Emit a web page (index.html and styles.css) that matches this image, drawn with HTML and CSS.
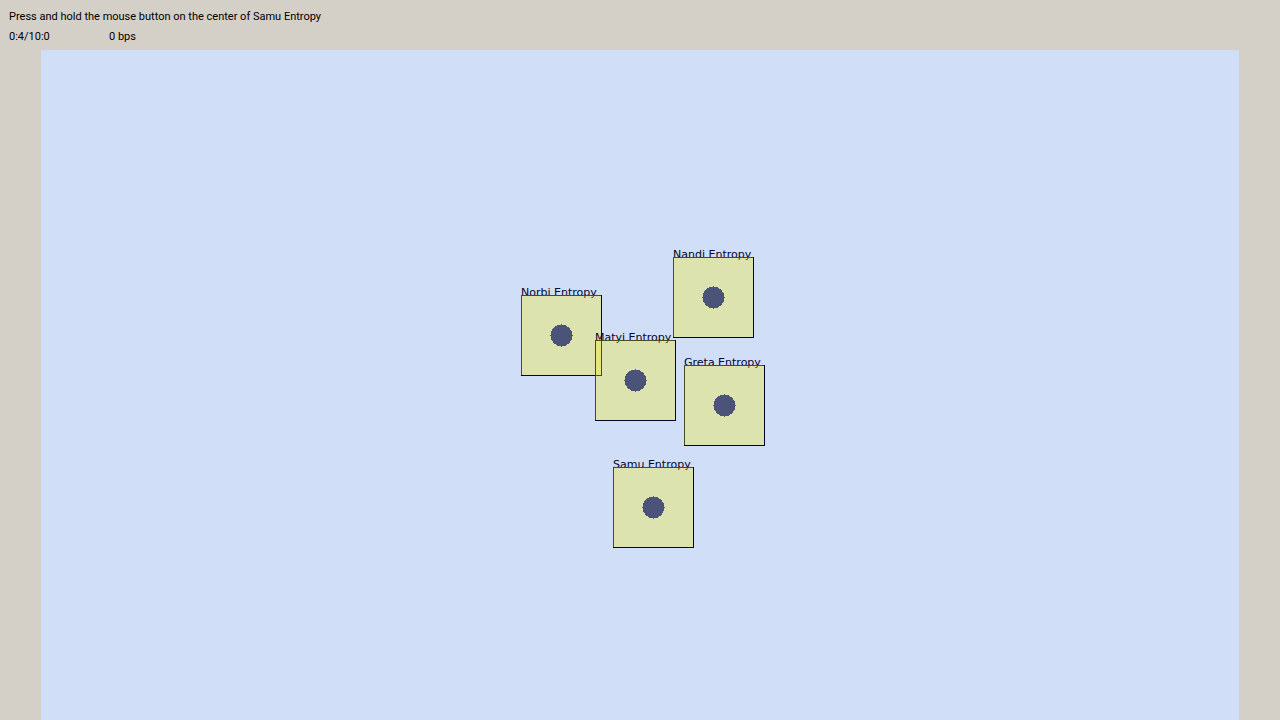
FILE: index.html
```html
<!DOCTYPE html>
<html lang="en">
<head>
<meta charset="utf-8">
<title>Entropy</title>
<link rel="stylesheet" href="styles.css">
</head>
<body>
<svg class="defs" aria-hidden="true">
  <symbol id="core" viewBox="0 0 23 23">
    <circle cx="11.5" cy="11.5" r="10.8"/>
    <path d="M11 0h1v23h-1zM0 11h23v1H0z"/>
  </symbol>
</svg>
<header class="status">
  <p class="line">Press and hold the mouse button on the center of Samu Entropy</p>
  <p class="line readout"><span class="time">0:4/10:0</span><span>0 bps</span></p>
</header>
<main class="arena">
  <div class="field">
    <div class="node norbi"><span class="label">Norbi Entropy</span><svg class="core"><use href="#core"/></svg></div>
    <div class="node nandi"><span class="label">Nandi Entropy</span><svg class="core"><use href="#core"/></svg></div>
    <div class="node matyi"><span class="label">Matyi Entropy</span><svg class="core"><use href="#core"/></svg></div>
    <div class="node greta"><span class="label">Greta Entropy</span><svg class="core"><use href="#core"/></svg></div>
    <div class="node samu"><span class="label">Samu Entropy</span><svg class="core"><use href="#core"/></svg></div>
  </div>
</main>
</body>
</html>
```
FILE: styles.css
```css
* {
  box-sizing: border-box;
}

body {
  margin: 0;
  min-height: 100vh;
  display: flex;
  flex-direction: column;
  background: #d4cfc7;
  color: #000;
  font: 11px/20px Roboto, "DejaVu Sans", sans-serif;
}

.defs {
  position: absolute;
  width: 0;
  height: 0;
}

.status {
  padding: 7px 9px 3px;
}

.line {
  margin: 0;
}

.readout {
  display: flex;
}

.time {
  width: 100px;
}

.arena {
  flex: 1;
  display: flex;
  justify-content: center;
  margin: 0 41px;
  background: #d0def8;
}

/* Free canvas, centred in the arena; nodes are placed from its top-left corner. */
.field {
  position: relative;
  width: 400px;
}

.node {
  position: absolute;
  width: 81px;
  height: 81px;
  border: 1px solid #00052b;
  display: grid;
  place-items: center;
}

/* Translucent tint over the label and the top and left edges. */
.node::after {
  content: "";
  position: absolute;
  inset: -1px 0 0 -1px;
  background: rgba(248, 239, 8, 0.3);
}

.label {
  position: absolute;
  left: -1px;
  top: -10px;
  color: #00052b;
  font: 11px/14px "DejaVu Sans", sans-serif;
  white-space: nowrap;
}

.core {
  position: relative;
  z-index: 1;
  width: 23px;
  height: 23px;
  fill: #4c5378;
  shape-rendering: crispEdges;
}

.norbi { left: 81px; top: 245px; }
.nandi { left: 233px; top: 207px; }
.matyi { left: 155px; top: 290px; }
.greta { left: 244px; top: 315px; }
.samu { left: 173px; top: 417px; }
```
